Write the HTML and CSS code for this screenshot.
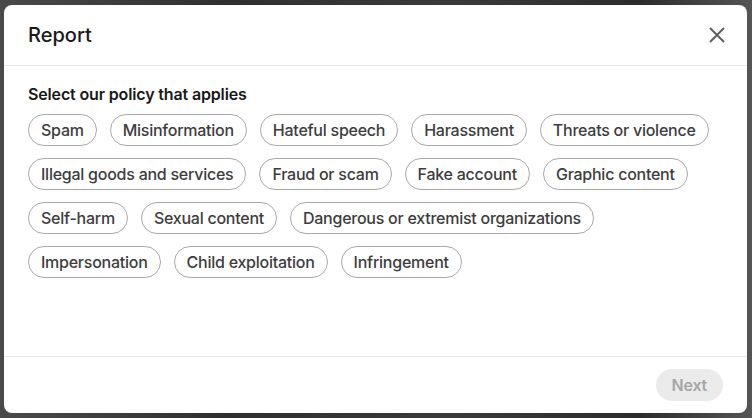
FILE: index.html
```html
<!doctype html>
<html lang="en">
<head>
  <meta charset="UTF-8">
  <title>Report</title>
  <link rel="stylesheet" href="styles.css">
</head>
<body>
  <div class="backdrop">
    <div class="modal">
      <div class="modal-header">
        <h2 class="modal-title">Report</h2>
        <button class="btn-close" aria-label="Dismiss">
          <svg width="16" height="16" viewBox="0 0 16 16">
            <path d="M1 1 L15 15 M15 1 L1 15" stroke="#5e5e5e" stroke-width="2" fill="none"/>
          </svg>
        </button>
      </div>
      <div class="modal-body">
        <h3 class="policy-title">Select our policy that applies</h3>
        <div class="chips">
          <button class="chip">Spam</button>
          <button class="chip">Misinformation</button>
          <button class="chip">Hateful speech</button>
          <button class="chip">Harassment</button>
          <button class="chip">Threats or violence</button>
          <button class="chip">Illegal goods and services</button>
          <button class="chip">Fraud or scam</button>
          <button class="chip">Fake account</button>
          <button class="chip">Graphic content</button>
          <button class="chip">Self-harm</button>
          <button class="chip">Sexual content</button>
          <button class="chip">Dangerous or extremist organizations</button>
          <button class="chip">Impersonation</button>
          <button class="chip">Child exploitation</button>
          <button class="chip">Infringement</button>
        </div>
      </div>
      <div class="modal-footer">
        <button class="btn-next" disabled>Next</button>
      </div>
    </div>
  </div>
</body>
</html>
```

FILE: styles.css
```css
* {
    box-sizing: border-box;
}

body {
    margin: 0;
    font-family: Inter, "Liberation Sans", sans-serif;
}

.backdrop {
    width: 752px;
    height: 418px;
    padding: 5px 5px 5px 4px;
    background: linear-gradient(90deg, #4a4a4a 0%, #2f2f2f 30%, #3a3a3a 60%, #2c2c2c 85%, #555 100%);
}

.modal {
    width: 743px;
    height: 408px;
    background: #fff;
    border-radius: 8px;
    display: flex;
    flex-direction: column;
}

.modal-header {
    height: 61px;
    padding: 0 14px 0 24px;
    display: flex;
    align-items: center;
    justify-content: space-between;
    border-bottom: 1px solid #e8e8e8;
}

.modal-title {
    margin: 0;
    font-size: 20px;
    font-weight: 500;
    color: #191919;
}

.btn-close {
    width: 32px;
    height: 32px;
    padding: 0;
    border: 0;
    background: none;
    display: flex;
    align-items: center;
    justify-content: center;
    cursor: pointer;
}

.modal-body {
    flex: 1;
    padding: 18px 24px 0;
}

.policy-title {
    margin: 0 0 10px;
    font-size: 16px;
    line-height: 20px;
    font-weight: 600;
    letter-spacing: -0.15px;
    color: #191919;
}

.chips {
    display: flex;
    flex-wrap: wrap;
    gap: 12px 13px;
}

.chip {
    height: 32px;
    padding: 0 12px;
    border: 1px solid #a8a8a8;
    border-radius: 16px;
    background: #fff;
    font-family: inherit;
    font-size: 16px;
    font-weight: 500;
    letter-spacing: -0.25px;
    color: #3d3d3d;
    cursor: pointer;
}

.chip:hover {
    background: #f3f3f3;
}

.modal-footer {
    height: 57px;
    padding: 12px 24px;
    border-top: 1px solid #e8e8e8;
    display: flex;
    justify-content: flex-end;
}

.btn-next {
    height: 32px;
    padding: 0 16px;
    border: 0;
    border-radius: 16px;
    background: #ebebeb;
    font-family: inherit;
    font-size: 16px;
    font-weight: 600;
    letter-spacing: -0.2px;
    color: #a6a6a6;
}
```
